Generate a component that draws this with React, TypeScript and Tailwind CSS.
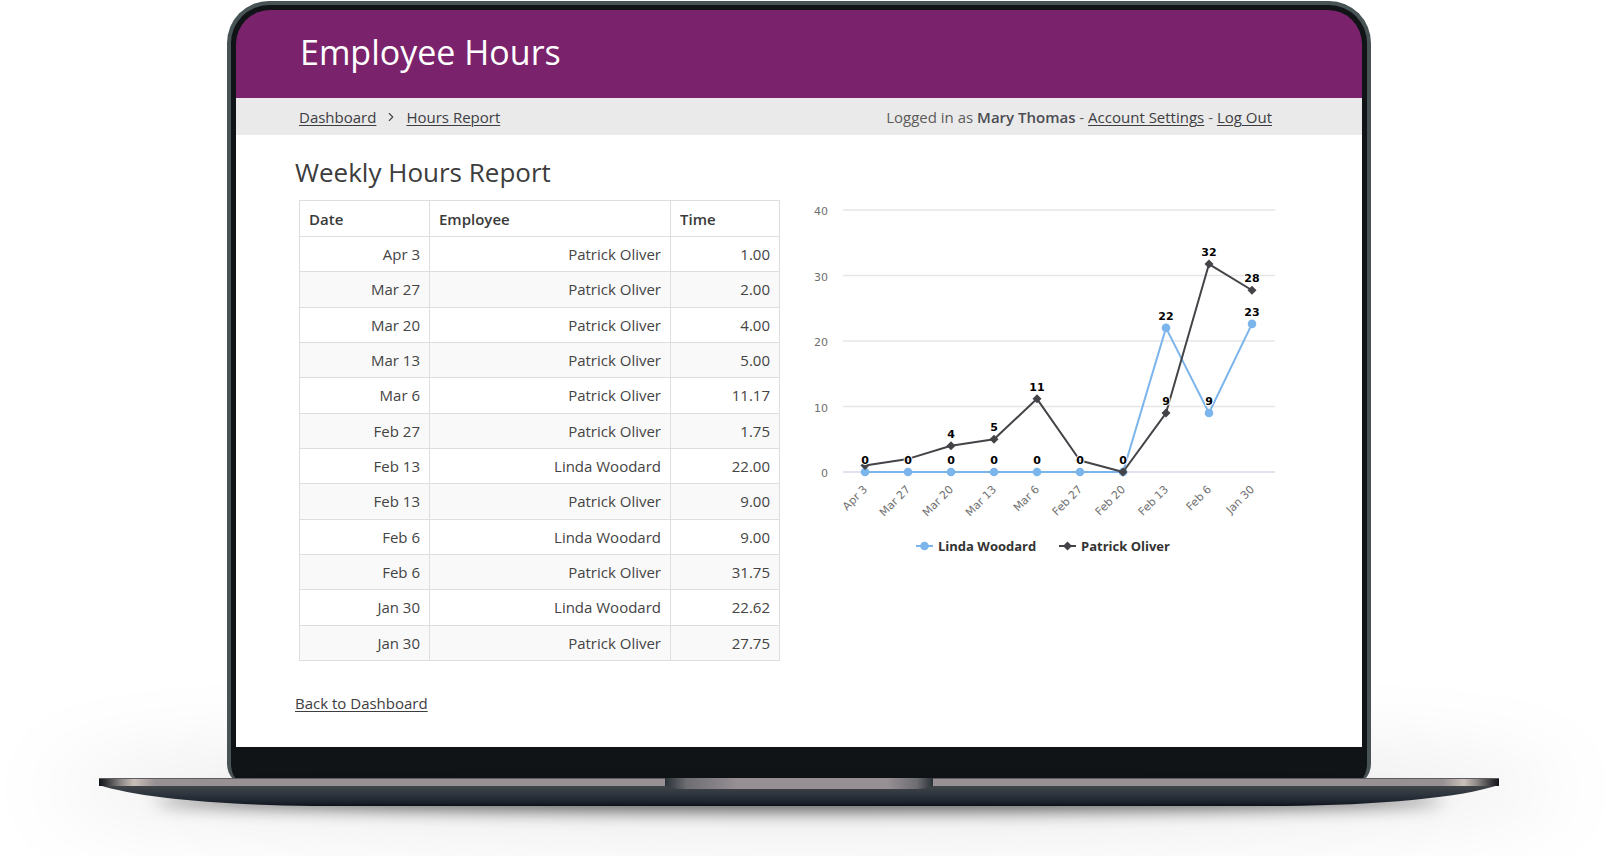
import { ChevronRight } from 'lucide-react';

const rows = [
  { date: 'Apr 3', employee: 'Patrick Oliver', time: '1.00' },
  { date: 'Mar 27', employee: 'Patrick Oliver', time: '2.00' },
  { date: 'Mar 20', employee: 'Patrick Oliver', time: '4.00' },
  { date: 'Mar 13', employee: 'Patrick Oliver', time: '5.00' },
  { date: 'Mar 6', employee: 'Patrick Oliver', time: '11.17' },
  { date: 'Feb 27', employee: 'Patrick Oliver', time: '1.75' },
  { date: 'Feb 13', employee: 'Linda Woodard', time: '22.00' },
  { date: 'Feb 13', employee: 'Patrick Oliver', time: '9.00' },
  { date: 'Feb 6', employee: 'Linda Woodard', time: '9.00' },
  { date: 'Feb 6', employee: 'Patrick Oliver', time: '31.75' },
  { date: 'Jan 30', employee: 'Linda Woodard', time: '22.62' },
  { date: 'Jan 30', employee: 'Patrick Oliver', time: '27.75' },
];

const weeks = ['Apr 3', 'Mar 27', 'Mar 20', 'Mar 13', 'Mar 6', 'Feb 27', 'Feb 20', 'Feb 13', 'Feb 6', 'Jan 30'];
const linda = [0, 0, 0, 0, 0, 0, 0, 22, 9, 22.62];
const patrick = [1, 2, 4, 5, 11.17, 1.75, 0, 9, 31.75, 27.75];

// labels that would overlap a neighbour are left out
const lindaLabels = ['0', '0', '0', '0', '0', '0', '0', '22', '9', '23'];
const patrickLabels = ['', '', '4', '5', '11', '', '', '9', '32', '28'];

const px = (i: number) => 61 + i * 43;
const py = (v: number) => 272 - v * 6.55;
const toPoints = (values: number[]) => values.map((v, i) => `${px(i)},${py(v)}`).join(' ');

function Diamond({ x, y }: { x: number; y: number }) {
  return <path d={`M${x} ${y - 4.5}L${x + 4.5} ${y}L${x} ${y + 4.5}L${x - 4.5} ${y}Z`} fill="#434348" />;
}

function HoursChart() {
  return (
    <svg viewBox="0 0 476 370" className="w-full" role="img" aria-label="Weekly hours by employee">
      <g className="font-['DejaVu_Sans',sans-serif]" fontSize="11" fill="#707070" textAnchor="end">
        {[40, 30, 20, 10, 0].map((tick) => (
          <g key={tick}>
            <line x1="39" x2="471" y1={py(tick)} y2={py(tick)} stroke={tick === 0 ? '#d5daea' : '#e6e6e6'} strokeWidth="1.5" />
            <text x="24" y={py(tick) + 5}>
              {tick}
            </text>
          </g>
        ))}
        {weeks.map((week, i) => (
          <text key={week} x={px(i) + 3} y="290" transform={`rotate(-45 ${px(i) + 3} 290)`}>
            {week}
          </text>
        ))}
      </g>

      <polyline points={toPoints(linda)} fill="none" stroke="#7cb5ec" strokeWidth="2" strokeLinejoin="round" />
      {linda.map((v, i) => (
        <circle key={i} cx={px(i)} cy={py(v)} r="4.3" fill="#7cb5ec" />
      ))}

      <polyline points={toPoints(patrick)} fill="none" stroke="#434348" strokeWidth="2" strokeLinejoin="round" />
      {patrick.map((v, i) => (
        <Diamond key={i} x={px(i)} y={py(v)} />
      ))}

      <g
        className="font-['DejaVu_Sans',sans-serif]"
        fontSize="11"
        fontWeight="700"
        textAnchor="middle"
        fill="#000000"
        stroke="#ffffff"
        strokeWidth="2"
        paintOrder="stroke"
      >
        {linda.map((v, i) => (
          <text key={i} x={px(i)} y={py(v) - 8}>
            {lindaLabels[i]}
          </text>
        ))}
        {patrick.map((v, i) => (
          <text key={i} x={px(i)} y={py(v) - 8}>
            {patrickLabels[i]}
          </text>
        ))}
      </g>

      <g fontSize="13" fontWeight="700" fill="#333333">
        <line x1="112" x2="129" y1="346" y2="346" stroke="#7cb5ec" strokeWidth="2" />
        <circle cx="120.5" cy="346" r="4.3" fill="#7cb5ec" />
        <text x="134" y="351">Linda Woodard</text>
        <line x1="255" x2="272" y1="346" y2="346" stroke="#434348" strokeWidth="2" />
        <Diamond x={263.5} y={346} />
        <text x="277" y="351">Patrick Oliver</text>
      </g>
    </svg>
  );
}

function LaptopBase() {
  return (
    <div className="relative">
      <div className="absolute inset-x-14 top-3 h-5 rounded-[50%] bg-black/70 blur-[9px]" />
      <svg viewBox="0 0 1400 28" preserveAspectRatio="none" className="relative block h-7 w-full" aria-hidden="true">
        <defs>
          <linearGradient id="deck" x1="0" x2="1" y1="0" y2="0">
            <stop offset="0" stopColor="#10151b" />
            <stop offset="0.005" stopColor="#343438" />
            <stop offset="0.016" stopColor="#8f8a88" />
            <stop offset="0.025" stopColor="#c9bfb8" />
            <stop offset="0.04" stopColor="#989194" />
            <stop offset="0.96" stopColor="#989194" />
            <stop offset="0.975" stopColor="#c9bfb8" />
            <stop offset="0.984" stopColor="#8f8a88" />
            <stop offset="0.995" stopColor="#343438" />
            <stop offset="1" stopColor="#10151b" />
          </linearGradient>
          <linearGradient id="belly" x1="0" x2="0" y1="0" y2="1">
            <stop offset="0" stopColor="#43474a" />
            <stop offset="0.5" stopColor="#2b323b" />
            <stop offset="0.85" stopColor="#1b212b" />
            <stop offset="1" stopColor="#0d1117" />
          </linearGradient>
          <linearGradient id="notch" x1="0" x2="1" y1="0" y2="0">
            <stop offset="0" stopColor="#2a3138" />
            <stop offset="0.08" stopColor="#6d6d72" />
            <stop offset="0.27" stopColor="#968f94" />
            <stop offset="0.83" stopColor="#968f94" />
            <stop offset="0.94" stopColor="#6d6d72" />
            <stop offset="1" stopColor="#2a3138" />
          </linearGradient>
        </defs>
        <path d="M0 7C40 20 120 27 215 28H1185C1280 27 1360 20 1400 7Z" fill="url(#belly)" />
        <rect width="1400" height="8" fill="url(#deck)" />
        <rect width="1400" height="1" fill="#5f5b60" />
        <path d="M566 0H834V8Q828 11 814 11H586Q572 11 566 8Z" fill="url(#notch)" />
      </svg>
    </div>
  );
}

const link = 'underline decoration-1 underline-offset-2 text-[#3d3d42]';

export default function App() {
  return (
    <div className="relative overflow-hidden bg-white pt-px pr-[113px] pb-[50px] pl-[99px] font-['Open_Sans','Noto_Sans',sans-serif] text-[15px] leading-5">
      <div className="absolute inset-x-12 bottom-5 h-24 rounded-[50%] bg-black/8 blur-2xl" />

      <div className="relative mx-32 -mb-2 rounded-t-[42px] rounded-b-[22px] border-x-4 border-t-4 border-[#485356] bg-[#101416] px-[5px] pt-[5px] pb-[39px]">
        <div className="overflow-hidden rounded-t-[34px] bg-[#7b226c]">
          <header className="flex h-[88px] items-center px-16 pb-1">
            <h1 className="text-[34px] leading-10 text-white">Employee Hours</h1>
          </header>

          <div className="flex h-[37px] items-center justify-between bg-[#eaeaea] pr-[90px] pl-[63px]">
            <nav className="flex items-center gap-2">
              <a href="#dashboard" className={link}>Dashboard</a>
              <ChevronRight className="size-3.5 text-[#4a4a4a]" />
              <a href="#hours" className={link}>Hours Report</a>
            </nav>
            <p className="text-[#5c5c5c]">
              Logged in as <span className="font-semibold text-[#4c4c52]">Mary Thomas</span> -{' '}
              <a href="#account" className={link}>Account Settings</a> -{' '}
              <a href="#logout" className={link}>Log Out</a>
            </p>
          </div>

          <main className="bg-white pt-[19px] pr-[82px] pb-[34px] pl-[59px] text-[#444444]">
            <h2 className="text-[26px] leading-9 text-[#3c3c3c]">Weekly Hours Report</h2>
            <div className="mt-2.5 flex items-start gap-6 pl-1">
              <table className="h-[461px] w-[481px] table-fixed border-collapse">
                <thead>
                  <tr className="h-9 text-left text-[#3a3a3a]">
                    <th className="w-[130px] border border-[#dedede] px-[9px] font-semibold">Date</th>
                    <th className="border border-[#dedede] px-[9px] font-semibold">Employee</th>
                    <th className="w-[109px] border border-[#dedede] px-[9px] font-semibold">Time</th>
                  </tr>
                </thead>
                <tbody>
                  {rows.map((row, i) => (
                    <tr key={i} className="text-right even:bg-[#f9f9f9]">
                      <td className="border border-[#dedede] px-[9px]">{row.date}</td>
                      <td className="border border-[#dedede] px-[9px]">{row.employee}</td>
                      <td className="border border-[#dedede] px-[9px]">{row.time}</td>
                    </tr>
                  ))}
                </tbody>
              </table>
              <div className="min-w-0 flex-1">
                <HoursChart />
              </div>
            </div>
            <a href="#dashboard" className="mt-8 inline-block text-[#3d3d42] underline decoration-1 underline-offset-2">
              Back to Dashboard
            </a>
          </main>
        </div>
      </div>

      <LaptopBase />
    </div>
  );
}
